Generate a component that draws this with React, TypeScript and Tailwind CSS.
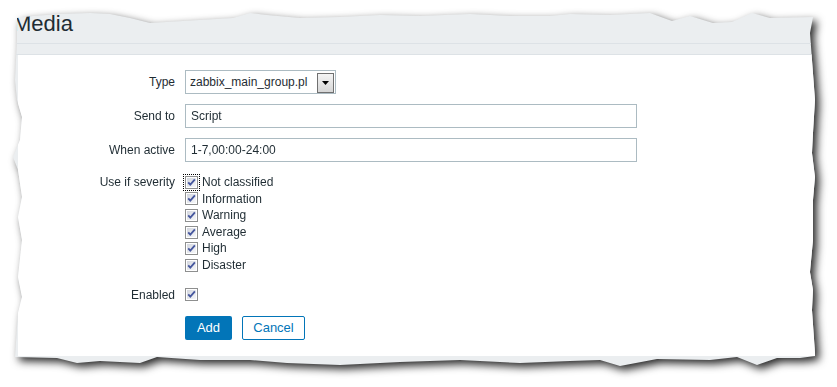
import React from "react";

const severities = [
  "Not classified",
  "Information",
  "Warning",
  "Average",
  "High",
  "Disaster",
];

function CheckBox() {
  return (
    <svg width="13" height="13" viewBox="0 0 13 13" className="block shrink-0">
      <defs>
        <linearGradient id="cbfill" x1="0" y1="0" x2="1" y2="1">
          <stop offset="0" stopColor="#d3d6de" />
          <stop offset="1" stopColor="#f6f7f9" />
        </linearGradient>
      </defs>
      <rect x="0.5" y="0.5" width="12" height="12" fill="#fff" stroke="#8e8f8f" />
      <rect x="2" y="2" width="9" height="9" fill="url(#cbfill)" />
      <path
        d="M3.2 6.4 L5.3 8.7 L9.9 3.4"
        fill="none"
        stroke="#46579e"
        strokeWidth="1.8"
      />
    </svg>
  );
}

function Row({
  label,
  className = "",
  children,
}: {
  label: string;
  className?: string;
  children: React.ReactNode;
}) {
  return (
    <div className={`flex ${className}`}>
      <div className="w-[157px] shrink-0 text-right">{label}</div>
      <div className="ml-[10px]">{children}</div>
    </div>
  );
}

export default function App() {
  return (
    <div className="h-[387px] w-[837px] overflow-hidden bg-white font-['Liberation_Sans',Arial,sans-serif] text-[12px] text-[#1f2c33]">
      {/* torn paper with shadow */}
      <div className="h-full w-full [filter:drop-shadow(4px_4px_4px_rgba(0,0,0,0.85))]">
        <div className="flex h-full w-full flex-col bg-[#ebeef0] [clip-path:polygon(17px_18px,33px_16px,60px_14px,90px_13px,110px_14px,130px_18px,150px_23px,183px_21px,233px_18px,250px_13px,267px_15px,300px_18px,340px_17px,380px_15px,420px_16px,470px_14px,510px_16px,550px_16px,570px_14px,610px_15px,650px_13px,672px_21px,690px_16px,713px_23px,732px_22px,752px_13px,770px_18px,813px_17px,810px_33px,812px_60px,815px_100px,813px_133px,812px_153px,815px_177px,813px_200px,813px_240px,810px_272px,813px_290px,812px_310px,815px_353px,815px_356px,800px_358px,777px_358px,757px_365px,737px_357px,710px_360px,657px_359px,620px_366px,600px_360px,570px_361px,520px_363px,460px_360px,400px_362px,340px_365px,287px_363px,250px_360px,200px_360px,157px_357px,140px_363px,100px_361px,77px_363px,57px_358px,15px_357px,18px_313px,22px_297px,18px_277px,22px_240px,18px_217px,22px_197px,18px_170px,13px_157px,20px_140px,22px_117px,17px_100px,15px_80px,17px_40px)]">
          <div className="h-[44px] shrink-0 border-b border-[#dde2e6] pl-[13px] pt-[13px]">
            <h1 className="text-[22px] leading-[22px]">Media</h1>
          </div>
          <div className="h-[11px] shrink-0 border-b border-[#dde2e6]" />

          <div className="ml-[18px] h-[301px] shrink-0 bg-white">
            <Row label="Type" className="mt-[15px] h-[24px] items-center">
              <div className="flex h-[24px] w-[151px] items-center border border-[#acbbc2] bg-white">
                <span className="flex-1 pl-[4px]">zabbix_main_group.pl</span>
                <span className="mr-[1px] mt-[2px] flex h-[20px] w-[17px] items-center justify-center border border-[#707070] bg-gradient-to-b from-[#f4f4f4] to-[#d6d6d6]">
                  <svg width="7" height="4" viewBox="0 0 7 4">
                    <path d="M0 0 H7 L3.5 4 Z" fill="#000" />
                  </svg>
                </span>
              </div>
            </Row>

            <Row label="Send to" className="mt-[10px] h-[24px] items-center">
              <input
                readOnly
                value="Script"
                className="block h-[24px] w-[452px] border border-[#acbbc2] px-[5px] text-[12px] text-[#1f2c33] outline-none"
              />
            </Row>

            <Row label="When active" className="mt-[10px] h-[24px] items-center">
              <input
                readOnly
                value="1-7,00:00-24:00"
                className="block h-[24px] w-[452px] border border-[#acbbc2] px-[5px] text-[12px] text-[#1f2c33] outline-none"
              />
            </Row>

            <Row label="Use if severity" className="mt-[12px] items-start leading-[16.6px]">
              <ul>
                {severities.map((s, i) => (
                  <li key={s} className="flex h-[16.6px] items-center gap-[4px]">
                    <span
                      className={
                        i === 0
                          ? "outline-1 outline-offset-[1px] outline-dotted outline-black"
                          : ""
                      }
                    >
                      <CheckBox />
                    </span>
                    <span>{s}</span>
                  </li>
                ))}
              </ul>
            </Row>

            <Row label="Enabled" className="mt-[13px] h-[16.6px] items-center">
              <CheckBox />
            </Row>

            <div className="mt-[13px] flex gap-[10px] pl-[167px]">
              <button className="h-[24px] w-[47px] rounded-[2px] bg-[#0275b8] text-[13px] text-white">
                Add
              </button>
              <button className="h-[24px] w-[63px] rounded-[2px] border border-[#0275b8] bg-white text-[13px] text-[#0275b8]">
                Cancel
              </button>
            </div>
          </div>
        </div>
      </div>
    </div>
  );
}
